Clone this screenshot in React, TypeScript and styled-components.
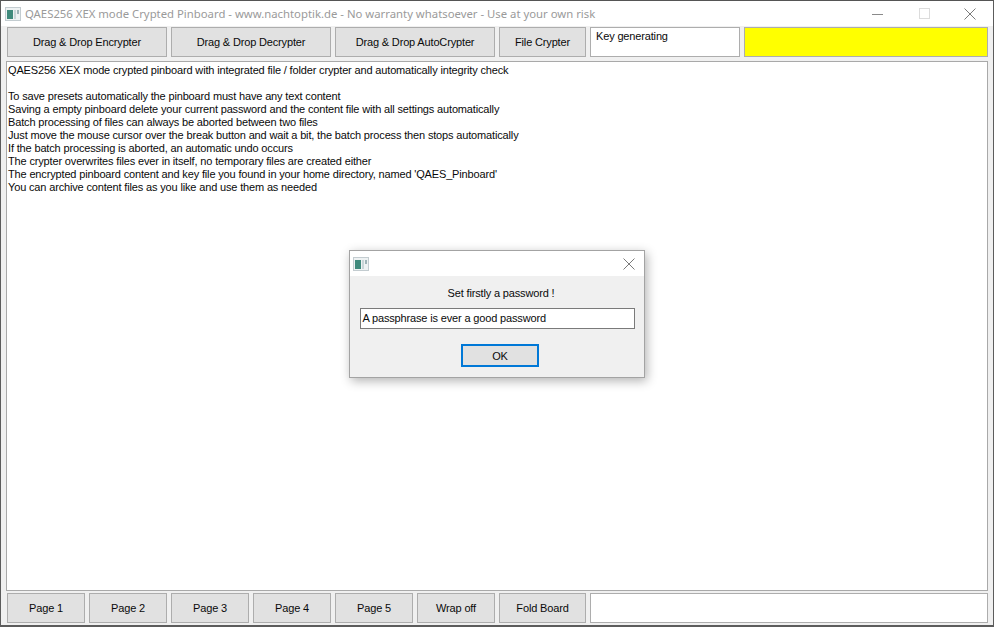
import React from 'react'
import styled, { createGlobalStyle } from 'styled-components'

const GlobalStyle = createGlobalStyle`
  html, body {
    margin: 0;
    padding: 0;
    background: #f0f0f0;
  }
  * {
    box-sizing: border-box;
  }
`

const uiFont = `"Liberation Sans", Arial, sans-serif`

const Window = styled.div`
  position: relative;
  width: 994px;
  height: 627px;
  display: flex;
  flex-direction: column;
  padding-bottom: 2px;
  background: #f0f0f0;
  border: 1px solid #5c5c5c;
  border-top-color: #555;
  border-bottom-width: 2px;
  overflow: hidden;
  font-family: ${uiFont};
  font-size: 11px;
  letter-spacing: -0.155px;
  color: #0a0a0a;
`

const TitleBar = styled.div`
  height: 25px;
  flex: none;
  display: flex;
  align-items: center;
  background: #fff;
  padding-left: 4px;
`

const Title = styled.div`
  margin-left: 4px;
  flex: 1;
  font-family: "Noto Sans", sans-serif;
  font-size: 11.33px;
  letter-spacing: 0;
  color: #9a9a9a;
  white-space: nowrap;
`

const CaptionButton = styled.div`
  width: 46px;
  height: 25px;
  display: flex;
  align-items: center;
  justify-content: center;
`

const TopRow = styled.div`
  height: 30px;
  flex: none;
  margin-top: 1px;
  padding-left: 6px;
  display: flex;
  gap: 4px;
`

const BottomRow = styled(TopRow)`
  margin-top: 2px;
`

const Button = styled.div<{ $width: number }>`
  width: ${p => p.$width}px;
  height: 30px;
  flex: none;
  display: flex;
  align-items: center;
  justify-content: center;
  background: #e1e1e1;
  border: 1px solid #adadad;
  white-space: nowrap;
`

const Field = styled.div<{ $width: number; $yellow?: boolean }>`
  width: ${p => p.$width}px;
  height: 30px;
  flex: none;
  padding: 2px 5px;
  line-height: 13px;
  background: ${p => (p.$yellow ? '#ffff00' : '#fff')};
  border: 1px solid #adadad;
`

const Board = styled.div`
  flex: 1;
  margin: 4px 5px 0 5px;
  padding: 2px 1px;
  background: #fff;
  border: 1px solid #a9a9a9;
  line-height: 13px;
`

const BoardLine = styled.div`
  height: 13px;
  white-space: pre;
`

const Dialog = styled.div`
  position: absolute;
  left: 348px;
  top: 249px;
  width: 296px;
  height: 128px;
  display: flex;
  flex-direction: column;
  align-items: center;
  background: #f0f0f0;
  border: 1px solid #a3a3a3;
  box-shadow: 2px 3px 10px rgba(0, 0, 0, 0.3);
`

const DialogTitle = styled.div`
  align-self: stretch;
  height: 25px;
  flex: none;
  display: flex;
  align-items: center;
  justify-content: space-between;
  background: #fff;
  padding: 0 9px 0 3px;
`

const Prompt = styled.div`
  margin: 11px 0 0 8px;
  line-height: 13px;
`

const PassInput = styled.div`
  width: 275px;
  height: 21px;
  margin-top: 8px;
  padding: 0 2px;
  line-height: 19px;
  background: #fff;
  border: 1px solid #7a7a7a;
`

const OkButton = styled.div`
  width: 78px;
  height: 23px;
  margin: 15px 0 0 6px;
  display: flex;
  align-items: center;
  justify-content: center;
  background: #e1e1e1;
  border: 2px solid #0078d7;
`

const AppIcon = () => (
  <svg width="16" height="14" viewBox="0 0 16 14">
    <rect x="0.5" y="0.5" width="15" height="13" fill="#eef2f3" stroke="#c3ccd0" />
    <rect x="2" y="3" width="6" height="9" fill="#3f8a7c" />
    <rect x="9" y="3" width="2" height="9" fill="#c9d6d8" />
    <rect x="12" y="3" width="2" height="4" fill="#9fb4b8" />
  </svg>
)

const CloseGlyph = () => (
  <svg width="12" height="12" viewBox="0 0 12 12">
    <path d="M0.5 0.5 L11.5 11.5 M11.5 0.5 L0.5 11.5" stroke="#7a7a7a" strokeWidth="1" fill="none" />
  </svg>
)

const boardText = [
  'QAES256 XEX mode crypted pinboard with integrated file / folder crypter and automatically integrity check',
  '',
  'To save presets automatically the pinboard must have any text content',
  'Saving a empty pinboard delete your current password and the content file with all settings automatically',
  'Batch processing of files can always be aborted between two files',
  'Just move the mouse cursor over the break button and wait a bit, the batch process then stops automatically',
  'If the batch processing is aborted, an automatic undo occurs',
  'The crypter overwrites files ever in itself, no temporary files are created either',
  "The encrypted pinboard content and key file you found in your home directory, named 'QAES_Pinboard'",
  'You can archive content files as you like and use them as needed',
]

const pages = ['Page 1', 'Page 2', 'Page 3', 'Page 4', 'Page 5', 'Wrap off']

export default function App() {
  return (
    <>
      <GlobalStyle />
      <Window>
        <TitleBar>
          <AppIcon />
          <Title>QAES256 XEX mode Crypted Pinboard - www.nachtoptik.de - No warranty whatsoever - Use at your own risk</Title>
          <CaptionButton>
            <svg width="12" height="12" viewBox="0 0 12 12">
              <path d="M0 6.5 H11" stroke="#8a8a8a" fill="none" />
            </svg>
          </CaptionButton>
          <CaptionButton>
            <svg width="11" height="11" viewBox="0 0 11 11">
              <rect x="0.5" y="0.5" width="10" height="10" stroke="#dcdcdc" fill="none" />
            </svg>
          </CaptionButton>
          <CaptionButton>
            <CloseGlyph />
          </CaptionButton>
        </TitleBar>
        <TopRow>
          <Button $width={160}>Drag &amp; Drop Encrypter</Button>
          <Button $width={160}>Drag &amp; Drop Decrypter</Button>
          <Button $width={160}>Drag &amp; Drop AutoCrypter</Button>
          <Button $width={87}>File Crypter</Button>
          <Field $width={150}>Key generating</Field>
          <Field $width={244} $yellow />
        </TopRow>
        <Board>
          {boardText.map((line, i) => (
            <BoardLine key={i}>{line}</BoardLine>
          ))}
        </Board>
        <BottomRow>
          {pages.map(p => (
            <Button key={p} $width={78}>{p}</Button>
          ))}
          <Button $width={87}>Fold Board</Button>
          <Field $width={398} />
        </BottomRow>
        <Dialog>
          <DialogTitle>
            <AppIcon />
            <CloseGlyph />
          </DialogTitle>
          <Prompt>Set firstly a password !</Prompt>
          <PassInput>A passphrase is ever a good password</PassInput>
          <OkButton>OK</OkButton>
        </Dialog>
      </Window>
    </>
  )
}
